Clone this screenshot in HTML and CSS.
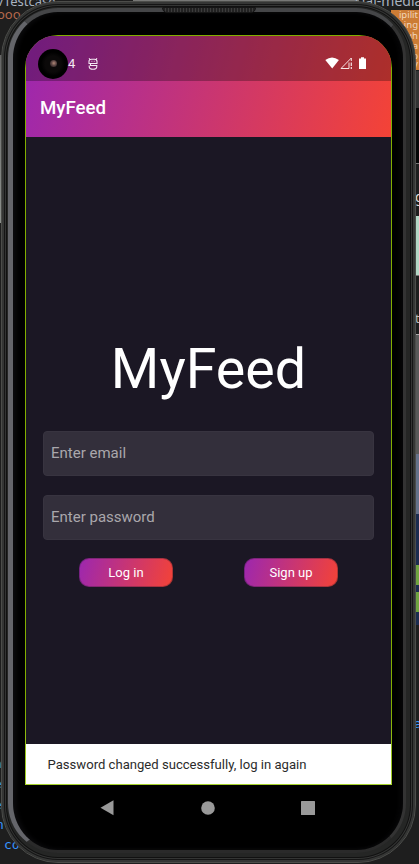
FILE: index.html
```html
<!DOCTYPE html>
<html lang="en">
<head>
<meta charset="utf-8">
<title>MyFeed</title>
<link rel="stylesheet" href="styles.css">
</head>
<body>
<div class="desktop">
  <div class="behind strip"></div>
  <div class="behind t-testcase">/Testcase</div>
  <div class="behind t-dots">ooo</div>
  <div class="behind t-media">cial-media</div>
  <div class="behind orange">ipilit<br>ing<br>uh<br>na<br>p<br>V</div>
  <div class="behind dark-a"></div>
  <div class="behind dark-b"></div>
  <div class="behind t-g">g</div>
  <div class="behind mint"></div>
  <div class="behind t-t">t</div>
  <div class="behind grey"></div>
  <div class="behind blue"></div>
  <div class="behind navy"></div>
  <div class="behind green g1"></div>
  <div class="behind green g2"></div>
  <div class="behind left-top"></div>
  <div class="behind code c1">n</div>
  <div class="behind code c2">n</div>
  <div class="behind code c3">e</div>
  <div class="behind code c4">e</div>
  <div class="behind code c5">n</div>
  <div class="behind code c6">co</div>
  <div class="behind code c7">a</div>
  <div class="phone">
    <div class="speaker"></div>
    <div class="bezel">
      <main class="screen">
        <div class="top">
          <div class="status">
            <span class="camera"><i></i></span>
            <span class="clock">4</span>
            <svg class="debug" width="10" height="12" viewBox="0 0 10 12" fill="none" stroke="#f3e8f3" stroke-width="1.1"><path d="M1 .3 2 1.500M9 .3 8 1.500M1 5.500V3.500Q1 1.200 3.500 1.200H6.500Q9 1.200 9 3.500V5.500M.5 5.500H9.500M3.500 3.300h.8M5.800 3.300h.8M2.500 5.500V7.500H8.800V8.500Q8.800 11.300 5 11.300Q1.200 11.300 1.200 8.500V7.500"/></svg>
            <span class="spacer"></span>
            <svg width="42" height="13" viewBox="0 0 42 13"><path d="M.3 3Q7-2 13.900 3L7.200 11.500Z" fill="#fff"/><path d="M26.300 4V1L16 11.500H24V5.500" fill="none" stroke="#f7e6e6" stroke-width="1"/><path d="M26.300 5.500V9M26.300 10V12" stroke="#f7e6e6" stroke-width="1.200"/><path d="M34 1.500H36V.3H39V1.500H41V12H34Z" fill="#fff"/></svg>
          </div>
          <header class="appbar">MyFeed</header>
        </div>
        <section class="login">
          <h1>MyFeed</h1>
          <div class="field email">Enter email</div>
          <div class="field">Enter password</div>
          <div class="actions"><button>Log in</button><button>Sign up</button></div>
        </section>
        <div class="snackbar">Password changed successfully, log in again</div>
      </main>
      <nav class="nav">
        <svg width="14" height="16" viewBox="0 0 14 16"><path d="M13.500 .3V15.300L.5 7.800Z" fill="#999"/></svg>
        <svg width="14" height="14" viewBox="0 0 14 14"><circle cx="7" cy="7" r="6.800" fill="#999"/></svg>
        <svg width="14" height="14" viewBox="0 0 14 14"><rect width="14" height="14" rx=".5" fill="#999"/></svg>
      </nav>
    </div>
  </div>
</div>
</body>
</html>
```
FILE: styles.css
```css
* { box-sizing: border-box; }
body { margin: 0; background: #1e1e1e; font-family: Roboto, sans-serif; }
.desktop { position: relative; width: 419px; height: 864px; overflow: hidden; background: #1e1e1e; }

.behind { position: absolute; color: #a9b3c0; font: 13px/14px "Noto Sans", sans-serif; white-space: nowrap; }
.strip { left: 133px; top: 0; width: 226px; height: 3px; background: #777876; }
.t-testcase { left: -1px; top: -6px; }
.t-dots { left: -3px; top: 7px; color: #b5684c; }
.t-media { left: 355px; top: -6px; font-size: 14px; }
.orange { left: 391px; top: 11px; width: 28px; height: 60px; background: #cc7c35; color: #f1d6bb; font-size: 9.5px; line-height: 10.3px; padding-right: 1px; margin-top: -1px; text-align: right; }
.dark-a { left: 412px; top: 71px; width: 7px; height: 37px; background: #333; }
.dark-b { left: 412px; top: 108px; width: 7px; height: 56px; background: #050505; border-bottom: 1px solid #777; }
.t-g { left: 415px; top: 190px; color: #ddd; font-size: 14px; }
.mint { left: 415px; top: 216px; width: 4px; height: 60px; background: #b4d7c6; border-bottom: 1px solid #777; }
.t-t { left: 415px; top: 311px; color: #bbb; }
.grey { left: 415px; top: 334px; width: 4px; height: 120px; background: #595959; border-top: 1px solid #aaa; }
.blue { left: 415px; top: 454px; width: 4px; height: 60px; background: #65718a; }
.navy { left: 415px; top: 514px; width: 4px; height: 111px; background: #1c2c50; }
.green { left: 415px; width: 4px; height: 20px; background: #70a440; }
.g1 { top: 565px; }
.g2 { top: 592px; }
.left-top { left: 0; top: 55px; width: 2px; height: 168px; background: linear-gradient(#666, #8b8f8b); }
.code { left: -5px; color: #3794ff; font: 13px/14px "DejaVu Sans Mono", monospace; }
.c1 { top: 718px; left: -7px; }
.c2 { top: 757px; left: -6px; }
.c3 { top: 777px; left: -6px; }
.c4 { top: 798px; left: -6px; }
.c5 { top: 818px; left: -4px; }
.c6 { top: 838px; left: 4px; }
.c7 { top: 717px; left: 414px; }

.phone {
  position: relative;
  width: 415px;
  height: 862px;
  margin: 1px 0 0 1px;
  border: 1px solid #4c4d4a;
  border-radius: 57px 60px 58px 57px;
  padding: 6px 9px 9px 6px;
  background: #252625;
  box-shadow: inset 0 0 0 2px #353635, inset 0 0 0 3px #151515, inset 0 0 0 4px #343534, inset 0 0 0 5px #111;
  display: flex;
  flex-direction: column;
}
.bezel {
  flex: 1;
  background: #000;
  border-style: solid;
  border-width: 4px 3px 3px 5px;
  border-color: #454648 #333 #2a2a2a #64656a;
  border-radius: 50px;
  padding: 23px 12px 0 12px;
  box-shadow: inset 3px 0 5px #0c0c0e, inset -3px 0 5px #080809;
}
.speaker { position: absolute; left: 160px; top: 5px; width: 94px; height: 6px; border-radius: 1px 1px 5px 5px; background: repeating-linear-gradient(90deg, #222 0 2px, #3c3c3c 2px 3px); border: 1px solid #151515; }

.screen {
  width: 367px;
  height: 750px;
  padding: 1px 1.5px 1px 1px;
  background: linear-gradient(#82ae00 90%, #a6d22b);
  border-radius: 33px 33px 0 0;
  display: flex;
  flex-direction: column;
  overflow: hidden;
}
.top { height: 101px; background: linear-gradient(105deg, #9c27b0, #f44336); flex: none; }
.status { height: 45px; background: rgba(0, 0, 0, .28); display: flex; align-items: center; padding: 10px 23.5px 0 12px; }
.camera { width: 30px; height: 30px; border-radius: 50%; background: radial-gradient(circle, #0b0909 0 8px, #000 12px); display: flex; align-items: center; justify-content: center; }
.camera i { width: 7px; height: 7px; border-radius: 50%; background: radial-gradient(circle at 55% 45%, #b38a78, #5b4544 45%, #171111); }
.clock { width: 8px; color: #f3e8f3; font-size: 13px; }
.debug { margin-left: 12px; }
.spacer { flex: 1; }
.appbar { height: 56px; padding: 1px 0 0 14px; color: #fff; font-weight: 500; font-size: 18.7px; line-height: 53px; }
.login { flex: 1; padding: 0 17.5px 0 17px; background: #1b1724; }
h1 { margin: 0; padding: 199px 0 0 1px; height: 265px; color: #fff; font-weight: 400; font-size: 55.6px; line-height: 66px; text-align: center; }
.field { height: 45px; border: 1px solid #383440; border-radius: 4px; background: #332f3b; color: #aaa7ac; padding: 0 7px; font-size: 15px; line-height: 42px; width: 331px; }
.email { margin: 29px 0 19px; }
.actions { display: flex; justify-content: space-between; padding: 18px 35px 0 36px; }
button { width: 94px; height: 29px; padding: 0; border: 1px solid rgba(27, 23, 36, .3); border-radius: 10px; background: linear-gradient(105deg, #9c27b0, #f44336) border-box; color: #fff; font: 13px/27px Roboto, sans-serif; }
.snackbar { height: 40px; background: #fff; color: #2b2b2b; padding-left: 21.5px; font-size: 13.1px; line-height: 41px; }
.nav { width: 367px; height: 45px; display: flex; align-items: center; justify-content: space-between; padding: 0 77px 0 75px; }
```
